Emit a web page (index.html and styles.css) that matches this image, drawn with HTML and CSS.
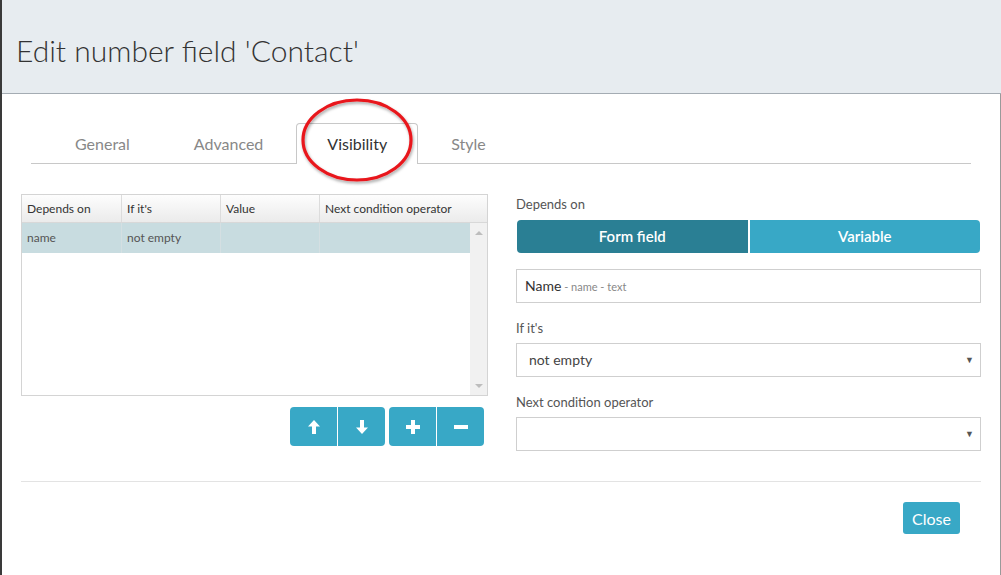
FILE: index.html
```html
<!DOCTYPE html>
<html>
<head>
<meta charset="utf-8">
<link rel="stylesheet" href="styles.css">
</head>
<body>
<div class="modal">
  <div class="modal-header">
    <h1 class="title">Edit number field 'Contact'</h1>
  </div>
  <div class="modal-body">
    <div class="tabs">
      <div class="tab">General</div>
      <div class="tab">Advanced</div>
      <div class="tab active">Visibility
        <svg class="circle" width="130" height="100" viewBox="0 0 130 100">
          <defs>
            <filter id="sh" x="-20%" y="-20%" width="140%" height="140%">
              <feDropShadow dx="1" dy="2" stdDeviation="1.5" flood-color="#000" flood-opacity="0.35"/>
            </filter>
          </defs>
          <ellipse cx="61" cy="42" rx="54" ry="40" fill="none" stroke="#e8161b" stroke-width="3.2" filter="url(#sh)"/>
        </svg>
      </div>
      <div class="tab">Style</div>
    </div>

    <div class="columns">
      <div class="left">
        <div class="grid">
          <div class="grid-head">
            <div class="c c1">Depends on</div>
            <div class="c c2">If it's</div>
            <div class="c c3">Value</div>
            <div class="c c4">Next condition operator</div>
          </div>
          <div class="grid-body">
            <div class="rows">
              <div class="row sel">
                <div class="c c1">name</div>
                <div class="c c2">not empty</div>
                <div class="c c3"></div>
                <div class="c c4"></div>
              </div>
            </div>
            <div class="scrollbar">
              <span class="arr up"></span>
              <span class="arr down"></span>
            </div>
          </div>
        </div>
        <div class="btns">
          <div class="group">
            <button class="ib"><svg width="12" height="14" viewBox="0 0 12 14"><path d="M6 0 L12 6.5 H8 V14 H4 V6.5 H0 Z" fill="#fff"/></svg></button>
            <button class="ib"><svg width="12" height="14" viewBox="0 0 12 14"><path d="M6 14 L12 7.5 H8 V0 H4 V7.5 H0 Z" fill="#fff"/></svg></button>
          </div>
          <div class="group">
            <button class="ib"><svg width="14" height="14" viewBox="0 0 14 14"><path d="M5 0 H9 V5 H14 V9 H9 V14 H5 V9 H0 V5 H5 Z" fill="#fff"/></svg></button>
            <button class="ib"><svg width="14" height="14" viewBox="0 0 14 14"><rect x="0" y="5" width="14" height="4" fill="#fff"/></svg></button>
          </div>
        </div>
      </div>

      <div class="right">
        <div class="label">Depends on</div>
        <div class="toggle">
          <div class="tg on">Form field</div>
          <div class="tg">Variable</div>
        </div>
        <div class="field"><span class="nm">Name</span><span class="sub"> - name - text</span></div>
        <div class="label l2">If it's</div>
        <div class="field select">not empty<span class="caret">▼</span></div>
        <div class="label l2">Next condition operator</div>
        <div class="field select"><span class="caret">▼</span></div>
      </div>
    </div>

    <div class="footer">
      <button class="close">Close</button>
    </div>
  </div>
</div>
</body>
</html>
```

FILE: styles.css
```css
* { box-sizing: border-box; }
html, body { margin: 0; padding: 0; background: #fff; }
body { font-family: Lato, "Open Sans", sans-serif; color: #333; width: 1001px; height: 575px; overflow: hidden; }

.modal { border-left: 2px solid #3a3a3a; height: 575px; }

.modal-header {
  height: 94px;
  background: #e7ecf0;
  border-bottom: 1px solid #a4acb3;
  padding: 28px 0 0 14px;
}
.title { margin: 0; font-weight: 300; font-size: 30px; color: #333; line-height: 44px; }

.modal-body {
  border-right: 1px solid #9a9a9a;
  height: 481px;
  padding: 29px 19px 0 19px;
}

.tabs {
  display: flex;
  margin: 0 10px;
  padding-left: 13px;
  border-bottom: 1px solid #c8c8c8;
  height: 41px;
  align-items: flex-end;
}
.tab {
  position: relative;
  padding: 0 30px;
  height: 40px;
  line-height: 40px;
  font-size: 16px;
  color: #888;
  margin-right: 2px;
  border: 1px solid transparent;
  border-bottom: none;
}
.tab.active {
  color: #333;
  background: #fff;
  border-color: #c8c8c8;
  border-radius: 4px 4px 0 0;
  height: 41px;
  margin-bottom: -1px;
}
.circle { position: absolute; left: -1px; top: -26px; pointer-events: none; }

.columns { display: flex; gap: 28px; margin-top: 30px; }
.left { width: 467px; }
.right { width: 465px; }

.grid { border: 1px solid #d4d4d4; height: 202px; display: flex; flex-direction: column; }
.grid-head {
  display: flex; height: 28px;
  background: linear-gradient(#fdfdfd, #ebebeb);
  border-bottom: 1px solid #d8d8d8;
  font-size: 12px; color: #333;
}
.c { line-height: 28px; padding-left: 5px; border-right: 1px solid #dcdcdc; white-space: nowrap; }
.c1 { width: 100px; }
.c2 { width: 99px; }
.c3 { width: 99px; }
.c4 { flex: 1; border-right: none; }
.grid-body { flex: 1; display: flex; }
.rows { flex: 1; }
.row { display: flex; height: 30px; font-size: 12px; color: #555; }
.row .c { line-height: 30px; border-right-color: #d4dfe2; }
.row.sel { background: #c8dce0; }
.row .c4 { border-right: none; }
.scrollbar { width: 17px; background: #f1f1f1; position: relative; }
.arr { position: absolute; left: 5px; width: 0; height: 0; border-left: 4px solid transparent; border-right: 4px solid transparent; }
.arr.up { top: 8px; border-bottom: 4px solid #bdbdbd; }
.arr.down { bottom: 7px; border-top: 4px solid #bdbdbd; }

.btns { display: flex; justify-content: flex-end; gap: 4px; margin-top: 11px; padding-right: 4px; }
.group { display: flex; gap: 1px; }
.ib {
  width: 47px; height: 39px; border: none; background: #38a8c6; padding: 0;
  display: flex; align-items: center; justify-content: center;
}
.group .ib:first-child { border-radius: 4px 0 0 4px; }
.group .ib:last-child { border-radius: 0 4px 4px 0; }

.label { font-size: 13px; color: #555; line-height: 18px; margin-top: 1px; }
.label.l2 { margin-top: 16px; }
.toggle { display: flex; gap: 2px; margin-top: 7px; }
.tg {
  flex: 1; height: 33px; line-height: 33px; text-align: center;
  color: #fff; font-size: 15px; background: #38a8c6; font-weight: 600;
}
.tg:first-child { border-radius: 4px 0 0 4px; margin-left: 1px; }
.tg:last-child { border-radius: 0 4px 4px 0; margin-right: 1px; }
.tg.on { background: #2a7f94; }

.field {
  height: 34px; border: 1px solid #cfcfcf; margin-top: 16px;
  padding-left: 8px; line-height: 32px; font-size: 14px; color: #333; position: relative;
}
.field.select { margin-top: 6px; padding-left: 12px; font-size: 14px; color: #444; }
.nm { font-size: 14px; }
.sub { font-size: 11px; color: #888; }
.caret { position: absolute; right: 6px; top: 0; font-size: 9px; color: #555; }

.footer { border-top: 1px solid #e3e3e3; margin-top: 30px; display: flex; justify-content: flex-end; padding: 20px 21px 0 0; }
.close {
  width: 57px; height: 32px; border: none; border-radius: 3px;
  background: #38a8c6; color: #fff; font-family: Lato, sans-serif; font-size: 16px; padding: 0;
}
```
